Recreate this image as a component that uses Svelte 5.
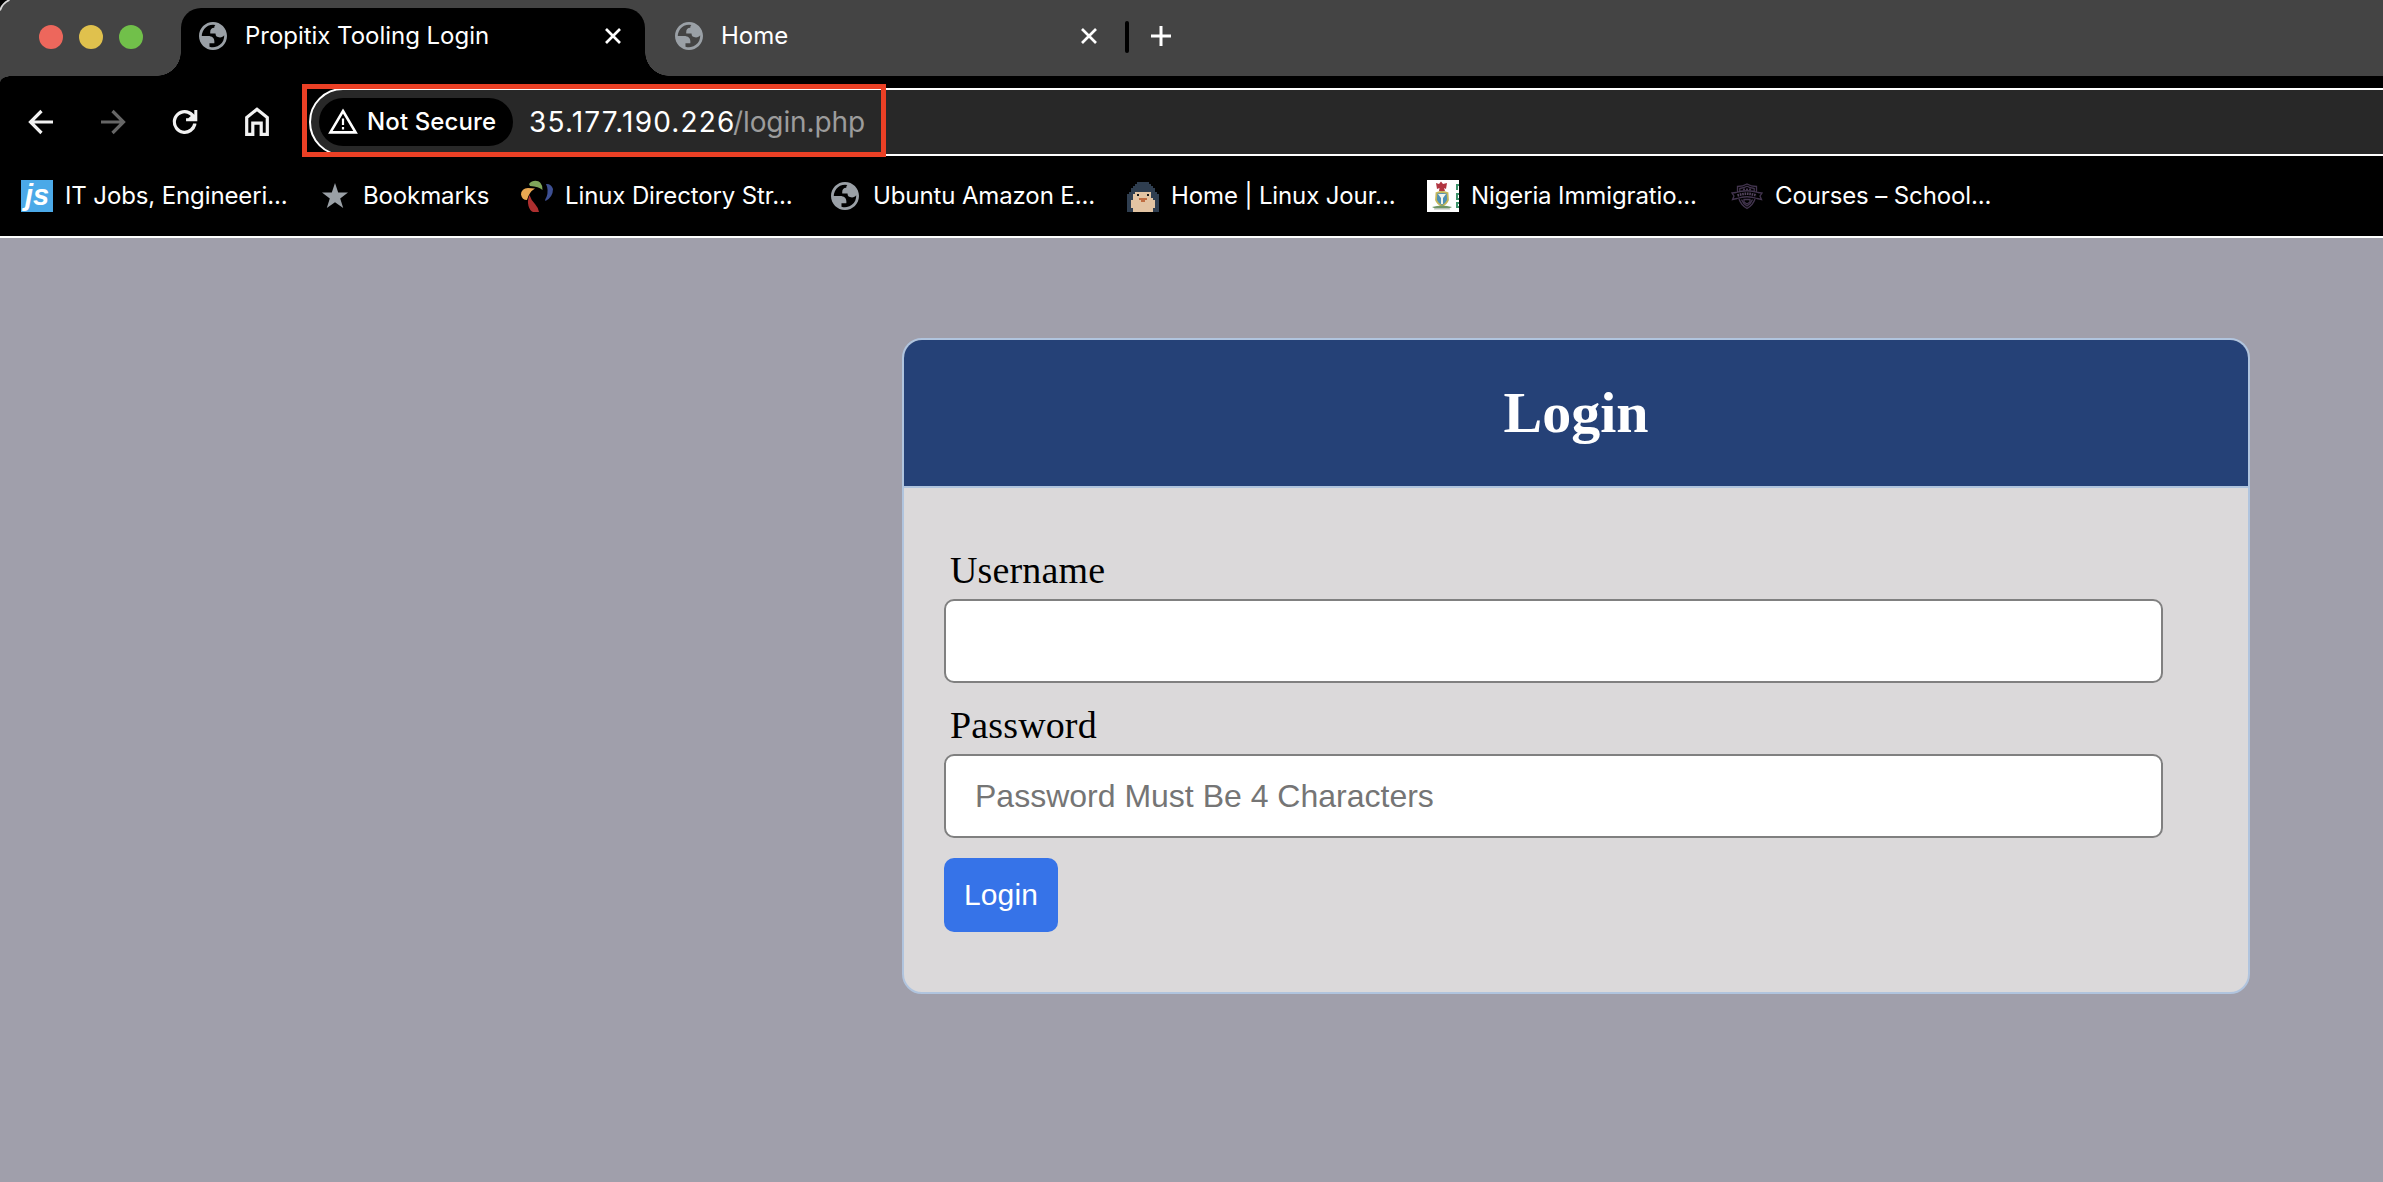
<script>
  const tabs = [
    { title: 'Propitix Tooling Login', active: true },
    { title: 'Home', active: false },
  ];
  const bookmarks = [
    { icon: 'js', label: 'IT Jobs, Engineeri...' },
    { icon: 'star', label: 'Bookmarks' },
    { icon: 'pinwheel', label: 'Linux Directory Str...' },
    { icon: 'globe', label: 'Ubuntu Amazon E...' },
    { icon: 'penguin', label: 'Home | Linux Jour...' },
    { icon: 'crest', label: 'Nigeria Immigratio...' },
    { icon: 'shield', label: 'Courses – School...' },
  ];
</script>

{#snippet globe()}
  <svg class="globe" viewBox="2 2 20 20">
    <path fill-rule="evenodd" d="M12 2C6.48 2 2 6.48 2 12s4.48 10 10 10 10-4.48 10-10S17.52 2 12 2zM4 12h4.4c3.407.022 4.922 1.73 4.543 5.127H9.488v2.47a8.004 8.004 0 0 0 10.498-8.08C19.327 12.504 18.332 13 17 13c-2.137 0-3.206-.916-3.206-2.75h-3.748c-.274-2.728.683-4.092 2.87-4.092 0-.975.327-1.597.811-1.97A8.004 8.004 0 0 0 4 12z" fill="#9aa0a6" />
  </svg>
{/snippet}

<div class="window">
  <header class="strip">
    <svg class="corner" viewBox="0 0 14 14">
      <path d="M0 0H9Q3 2 0 10Z" fill="#000" />
      <path d="M0 10.5Q2.5 3 9.5 0" fill="none" stroke="#d8d8d8" stroke-width="1.8" />
    </svg>
    <div class="lights">
      <span class="red"></span><span class="yellow"></span><span class="green"></span>
    </div>
    {#each tabs as tab}
      <div class="tab" class:active={tab.active}>
        {@render globe()}
        <span class="title">{tab.title}</span>
        <svg class="close" viewBox="0 0 16 16"><path d="M1 1L15 15M15 1L1 15" stroke="#fff" stroke-width="2.7" /></svg>
      </div>
    {/each}
    <span class="divider"></span>
    <svg class="plus" viewBox="0 0 20 20"><path d="M10 0V20M0 10H20" stroke="#fff" stroke-width="3" /></svg>
  </header>

  <div class="chrome">
    <nav class="toolbar">
      <div class="nav">
        <svg viewBox="0 0 32 32"><path d="M16.5 5L5.5 16L16.5 27M5.5 16H28" fill="none" stroke="#f2f2f2" stroke-width="3.2" /></svg>
        <svg viewBox="0 0 32 32"><path d="M15.5 5L26.5 16L15.500 27M26.5 16H4" fill="none" stroke="#666" stroke-width="3.2" /></svg>
        <svg viewBox="0 0 32 32"><path transform="translate(-2.3 -2) scale(1.5)" d="M17.65 6.35A7.96 7.96 0 0 0 12 4a8 8 0 1 0 7.75 10V13h-2.1A5.9 5.9 0 0 1 12 17.8a5.8 5.8 0 1 1 4.1-9.85L14.4 9.5H12.9V11.5H20.4V4H18.4V7.1z" fill="#f2f2f2" /></svg>
        <svg viewBox="0 0 32 32"><path d="M5.7 28.4V11.5L16 3.2L26.3 11.5V28.4H20.2V17.2H11.8V28.4Z" fill="none" stroke="#f2f2f2" stroke-width="3.2" /></svg>
      </div>
      <div class="address">
        <div class="chip">
          <svg viewBox="0 0 30 26"><path d="M15 3L27.6 24.4H2.4Z" fill="none" stroke="#fff" stroke-width="2.6" /><path d="M15 10.5V17M15 19V21.4" stroke="#fff" stroke-width="2.2" /></svg>
          <span>Not Secure</span>
        </div>
        <span class="host">35.177.190.226</span><span class="path">/login.php</span>
      </div>
      <div class="marker"></div>
    </nav>

    <div class="bookmarks">
      {#each bookmarks as b}
        <div class="bookmark">
          <span class="icon">
            {#if b.icon === 'js'}
              <span class="js">js</span>
            {:else if b.icon === 'star'}
              <svg viewBox="0 0 32 32"><path d="M16 3L19.2 12.6H29L21.2 18.6L24.2 28L16 22.3L7.8 28L10.8 18.6L3 12.6H12.8Z" fill="#9aa0a6" /></svg>
            {:else if b.icon === 'pinwheel'}
              <svg viewBox="0 0 32 32">
                <path d="M8 4C11 0 17 0 19.5 3Q22 6 21.5 10Q18 6.5 9 6Z" fill="#7fa65a" />
                <path d="M25 4Q30 3.500 32 9Q32 17 24.500 21Q23.500 20 25.500 17Q28 10 25 4Z" fill="#3d4f92" />
                <path d="M14 8.500Q8 12 6 20Q1 20 0 14.500Q.5 8 7 8Z" fill="#e9a852" />
                <path d="M8.500 15Q6 21 7.500 26Q9 31 12 32H18Q17.500 28 14 24Q10 20 8.500 15Z" fill="#ad2f2f" />
              </svg>
            {:else if b.icon === 'globe'}
              {@render globe()}
            {:else if b.icon === 'penguin'}
              <svg viewBox="0 0 32 32" shape-rendering="crispEdges">
                <path d="M10 2H22V4H24V6H26V8H28V12H30V14H32V32H0V14H2V12H4V8H6V6H8V4H10Z" fill="#2f3e50" />
                <path d="M8 12H24V18H26V20H28V28H26V32H6V28H4V20H6V14H8Z" fill="#e3c4a3" />
                <path d="M10 14H12V16H10ZM20 14H22V16H20Z" fill="#1b1b1b" />
                <path d="M12 18H20V20H18V22H14V20H12Z" fill="#c06d42" />
              </svg>
            {:else if b.icon === 'crest'}
              <svg viewBox="0 0 32 32">
                <rect width="32" height="32" fill="#fff" />
                <path d="M9 3L12 4L14 1.500L16 4L20 3L19 9L17 8L18 11H12L12.500 8L10 9Z" fill="#b13440" />
                <path d="M9.500 13Q15 11 20.500 13L21 20Q19.500 24 15 26Q10.500 24 9 20Z" fill="#4d8fb5" stroke="#c5b65a" stroke-width="1.800" />
                <path d="M11 14H19L16 18V24H14V18Z" fill="#f2f4ec" />
                <path d="M5 27Q15 24 25 27L22 28.500H8Z" fill="#6f9566" />
                <path d="M7 29H23" stroke="#bbb" stroke-width="1" />
                <path d="M29 4H32V6H31V10H29ZM29 13H32V15H31V18H32V20H29ZM29 22H32V24H31V26H32V28H29Z" fill="#3c936b" />
              </svg>
            {:else}
              <svg viewBox="0 0 32 32" fill="none" stroke="#43354f" stroke-width="1.300">
                <path d="M6.500 12V6.500Q12 6.500 16 4Q20 6.500 25.500 6.500V12M8 19Q10 25 16 28.500Q22 25 24 19" />
                <path d="M8.800 12V8.500Q13 8 16 6.300Q19 8 23.200 8.500V12M10.500 19.500Q12 23.500 16 26Q20 23.500 21.500 19.500" />
                <path d="M1 13L5 12.500Q16 9 27 12.500L31 13L29 16L30.500 19.500L26 18.500Q16 15 6 18.500L1.500 19.500L3 16Z" />
                <path d="M12 9.500H20" stroke-width="2" stroke-dasharray="2 1" />
                <path d="M13 19.500H19V22L16 24L13 22Z" />
                <path d="M6.500 15.500Q16 12 25.500 15.500" stroke="#54445f" stroke-width="2.600" stroke-dasharray="1.600 .8" />
              </svg>
            {/if}
          </span>
          <span class="label">{b.label}</span>
        </div>
      {/each}
    </div>
  </div>

  <main>
    <section class="card">
      <h1>Login</h1>
      <form>
        <label for="user">Username</label>
        <input id="user" type="text" />
        <label for="pass">Password</label>
        <input id="pass" type="password" placeholder="Password Must Be 4 Characters" />
        <button type="button">Login</button>
      </form>
    </section>
  </main>
</div>

<style>
  :global(body) { margin: 0; overflow: hidden; background: #a09fab; }
  .window {
    display: flex; flex-direction: column; height: 1182px; overflow: hidden;
    font-family: Inter, "Liberation Sans", sans-serif; color: #fff;
  }
  svg { display: block; flex: none; }

  .strip {
    position: relative; display: flex; align-items: flex-start; box-sizing: border-box;
    height: 76px; padding-top: 8px; background: #444;
  }
  .corner { position: absolute; left: 0; top: 0; width: 14px; height: 14px; }
  .lights { display: flex; gap: 16px; width: 142px; padding: 17px 0 0 39px; }
  .lights span { width: 24px; height: 24px; border-radius: 50%; }
  .red { background: #ed675c; }
  .yellow { background: #e0c14d; }
  .green { background: #71c04a; }
  .tab {
    position: relative; display: flex; align-items: center; box-sizing: border-box;
    width: 476px; height: 68px; padding: 0 24px 13px 30px;
  }
  .tab.active { width: 464px; padding: 0 24px 13px 18px; background: #000; border-radius: 20px 20px 0 0; }
  .tab.active::before, .tab.active::after {
    content: ""; position: absolute; bottom: 0; width: 24px; height: 24px;
  }
  .tab.active::before { left: -24px; background: radial-gradient(circle at 0 0, transparent 23.5px, #000 24px); }
  .tab.active::after { right: -24px; background: radial-gradient(circle at 100% 0, transparent 23.5px, #000 24px); }
  .globe { width: 28px; height: 28px; }
  .title { flex: 1; margin-left: 18px; font-size: 24px; line-height: 30px; letter-spacing: -.03px; }
  .close { width: 16px; height: 16px; }
  .divider { width: 4px; height: 32px; margin: 13px 22px 0 4px; border-radius: 2px; background: #000; }
  .plus { width: 20px; height: 20px; margin-top: 18px; }

  .chrome { height: 160px; background: #000; border-bottom: 2px solid #fff; position: relative; }
  .chrome::before {
    content: ""; position: absolute; left: 0; top: 0; width: 12px; height: 6px;
    background: radial-gradient(ellipse 12px 6px at 100% 100%, #000 94%, #444 100%);
  }
  .toolbar { position: relative; display: flex; align-items: center; height: 92px; }
  .nav { display: flex; gap: 40px; width: 284px; padding-left: 25px; }
  .nav svg { width: 32px; height: 32px; }
  .address {
    display: flex; align-items: center; flex: 1; box-sizing: border-box; height: 68px;
    margin-right: -40px; padding-left: 8px; border: 2px solid #fff; border-radius: 34px; background: #282828;
    font-size: 28px; line-height: 34px; white-space: nowrap;
  }
  .chip {
    display: flex; align-items: center; box-sizing: border-box; width: 194px; height: 48px;
    margin-right: 16px; padding-left: 9px; border-radius: 24px; background: #000;
    font-size: 24px; font-weight: 500; line-height: 30px;
  }
  .chip svg { width: 30px; height: 26px; margin-top: -2px; }
  .chip span { margin: -1px 0 0 9px; letter-spacing: .12px; }
  .host { width: 204px; letter-spacing: 1.16px; }
  .path { color: #9c9c9c; letter-spacing: -.1px; }
  .marker {
    position: absolute; left: 302px; top: 8px; box-sizing: border-box;
    width: 584px; height: 73px; border: 5px solid #eb4025;
  }

  .bookmarks {
    display: grid; grid-template-columns: 298px 202px 308px 298px 300px 304px 300px;
    padding: 12px 0 0 21px;
  }
  .bookmark { display: flex; align-items: center; gap: 12px; height: 32px; }
  .icon { display: flex; align-items: center; justify-content: center; flex: none; width: 32px; height: 32px; }
  .icon svg:not(.globe) { width: 32px; height: 32px; }
  .js {
    width: 32px; height: 32px; background: #4ba9e8; text-align: center;
    font: italic bold 29px/31px "Liberation Sans", sans-serif;
  }
  .label { font-size: 24px; line-height: 30px; letter-spacing: -.12px; white-space: nowrap; }

  main { flex: 1; padding: 100px 0 0 902px; color: #000; }
  .card {
    box-sizing: border-box; width: 1348px; height: 656px; overflow: hidden;
    border: 2px solid #b0c4de; border-radius: 20px; background: #dbd9da;
    font-family: "Liberation Serif", serif;
  }
  h1 {
    margin: 0; height: 146px; border-bottom: 2px solid #b0c4de; background: #254177;
    color: #fff; font-size: 58px; line-height: 146px; text-align: center;
  }
  form { display: flex; flex-direction: column; align-items: flex-start; padding: 62px 40px 0; }
  label { margin-left: 6px; font-size: 38px; line-height: 40px; letter-spacing: .14px; }
  input {
    box-sizing: border-box; width: 1219px; height: 84px; margin: 9px 0 22px; padding: 0 29px;
    border: 2px solid #808080; border-radius: 10px; background: #fff;
    font: 32px "Liberation Sans", sans-serif;
  }
  input::placeholder { color: #757575; opacity: 1; }
  #pass { margin-bottom: 20px; }
  button {
    width: 114px; height: 74px; padding: 0; border: 0; border-radius: 10px; background: #3673e8;
    color: #fff; font: 30px/74px "Liberation Sans", sans-serif; letter-spacing: .1px;
  }
</style>
